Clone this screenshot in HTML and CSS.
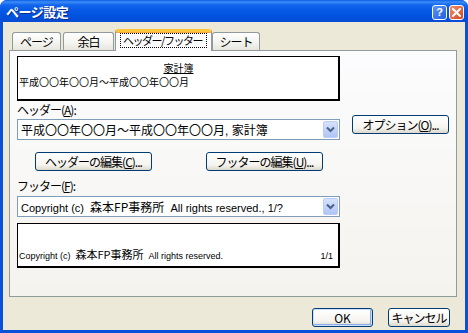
FILE: index.html
```html
<!DOCTYPE html>
<html>
<head>
	<title>ページ設定</title>
	<link rel="stylesheet" href="styles.css">
</head>
<body>
	<div class="window">
		<div class="titlebar">
			<span class="title">ページ設定</span>
			<span class="caption-btns">
				<span class="cap-btn help">?</span>
				<span class="cap-btn close">
					<svg width="9" height="9" viewBox="0 0 9 9"><path d="M1 1 L8 8 M8 1 L1 8" stroke="#fff" stroke-width="2" stroke-linecap="square"/></svg>
				</span>
			</span>
		</div>
		<div class="client">
			<div class="tabs">
				<div class="tab tab-page">ページ</div>
				<div class="tab tab-margin">余白</div>
				<div class="tab tab-active"><span class="focus">ヘッダー/フッター</span></div>
				<div class="tab tab-sheet">シート</div>
			</div>
			<div class="panel">
				<div class="left">
					<div class="preview preview-header">
						<div class="pv-center"><u>家計簿</u></div>
						<div class="pv-left">平成〇〇年〇〇月～平成〇〇年〇〇月</div>
					</div>
					<div class="label">ヘッダー(<u>A</u>):</div>
					<div class="combo">
						<span class="combo-text">平成〇〇年〇〇月～平成〇〇年〇〇月, 家計簿</span>
						<span class="drop"><svg width="9" height="7" viewBox="0 0 9 7"><path d="M1 1.5 L4.5 5 L8 1.5" fill="none" stroke="#4D6185" stroke-width="2"/></svg></span>
					</div>
					<div class="edit-row">
						<button class="btn btn-edit">ヘッダーの編集(<u>C</u>)...</button>
						<button class="btn btn-edit">フッターの編集(<u>U</u>)...</button>
					</div>
					<div class="label label-footer">フッター(<u>F</u>):</div>
					<div class="combo combo-footer">
						<span class="combo-text latin">Copyright (c)  <span class="cjk-12">森本FP事務所</span>  All rights reserved., 1/?</span>
						<span class="drop"><svg width="9" height="7" viewBox="0 0 9 7"><path d="M1 1.5 L4.5 5 L8 1.5" fill="none" stroke="#4D6185" stroke-width="2"/></svg></span>
					</div>
					<div class="preview preview-footer">
						<span class="pv-foot">Copyright (c)  <span class="cjk">森本FP事務所</span>  All rights reserved.</span>
						<span class="pv-page">1/1</span>
					</div>
				</div>
				<div class="right">
					<button class="btn btn-option">オプション(<u>O</u>)...</button>
				</div>
			</div>
			<div class="dialog-btns">
				<button class="btn btn-ok">OK</button>
				<button class="btn btn-cancel">キャンセル</button>
			</div>
		</div>
	</div>
</body>
</html>
```

FILE: styles.css
```css
body {
	margin: 0;
	font-family: "Liberation Sans", "Noto Sans CJK JP", sans-serif;
	font-size: 12px;
	color: #000;
}

.window {
	width: 468px;
	height: 333px;
	display: flex;
	flex-direction: column;
	background: #0A50D8;
	border-radius: 7px 7px 0 0;
	overflow: hidden;
}

.titlebar {
	height: 22px;
	display: flex;
	align-items: center;
	justify-content: space-between;
	padding: 0 4px 0 6px;
	background: linear-gradient(#0A5FE8 0, #3C8CF6 2px, #1265EC 5px, #0458E4 11px, #0052DE 17px, #0A4BD4 22px);
}

.title {
	color: #fff;
	font-family: "Noto Sans CJK JP", sans-serif;
	font-weight: bold;
	font-size: 13px;
	text-shadow: 1px 1px 0 #0A2A8C;
	letter-spacing: -0.5px;
}

.caption-btns {
	display: flex;
	gap: 2px;
	margin-top: 2px;
}

.cap-btn {
	width: 13px;
	height: 13px;
	border: 1px solid #fff;
	border-radius: 3px;
	display: flex;
	align-items: center;
	justify-content: center;
	color: #fff;
	font-weight: bold;
	font-size: 11px;
}

.help {
	background: linear-gradient(135deg, #5E93F6, #2060E0);
}

.close {
	background: linear-gradient(135deg, #F0906A, #D8431C);
}

.client {
	flex: 1;
	margin: 0 3px 3px;
	background: #ECE9D8;
	display: flex;
	flex-direction: column;
}

.tabs {
	display: flex;
	align-items: flex-start;
	height: 22px;
	margin: 7px 0 -1px 9px;
	font-family: "Noto Sans CJK JP", sans-serif;
	letter-spacing: -1px;
	white-space: nowrap;
}

.tab {
	height: 18px;
	margin-top: 3px;
	box-sizing: border-box;
	border: 1px solid #919B9C;
	border-bottom: none;
	border-radius: 3px 3px 0 0;
	background: linear-gradient(#FFFFFF, #F3F3EF 60%, #E6E5DE);
	display: flex;
	align-items: center;
	justify-content: center;
	line-height: 14px;
}

.tab-page {
	width: 49px;
}

.tab-margin {
	width: 51px;
	margin-left: 2px;
}

.tab-active {
	position: relative;
	z-index: 1;
	width: 97px;
	height: 22px;
	margin-top: 0;
	margin-left: 1px;
	border-top: 3px solid #FFC83C;
	box-shadow: inset 0 1px 0 #F5A83A;
	background: #FCFCFE;
	padding-bottom: 2px;
}

.focus {
	border: 1px dotted #000;
	padding: 0 4px 0 2px;
	font-size: 11px;
	letter-spacing: -1.5px;
	line-height: 13px;
}

.tab-sheet {
	width: 48px;
}

.panel {
	height: 247px;
	box-sizing: border-box;
	margin: 0 8px 0 6px;
	border: 1px solid #919B9C;
	background: linear-gradient(#FCFCFE, #F4F3EE);
	display: flex;
	padding: 5px 0 0 7px;
}

.left {
	width: 323px;
	display: flex;
	flex-direction: column;
}

.preview {
	height: 45px;
	box-sizing: border-box;
	background: #fff;
	border: 1px solid #000;
	border-right-width: 2px;
	border-bottom-width: 2px;
}

.preview-header {
	padding: 4px 0 0 1px;
	font-family: "Noto Sans CJK JP", sans-serif;
	font-size: 10px;
	line-height: 14px;
}

.pv-center {
	text-align: center;
}

.label {
	margin-top: 2px;
	line-height: 14px;
	font-family: "Noto Sans CJK JP", sans-serif;
	letter-spacing: -1px;
}

.label-footer {
	margin-top: 8px;
}

.combo {
	margin-top: 2px;
	height: 21px;
	box-sizing: border-box;
	border: 1px solid #7F9DB9;
	background: #fff;
	display: flex;
	align-items: center;
	justify-content: space-between;
	padding: 0 1px 0 3px;
}

.combo-footer {
	margin-top: 3px;
}

.combo-text {
	white-space: pre;
	font-size: 12px;
}

.latin {
	font-size: 11px;
}

.cjk-12 {
	font-family: "Noto Sans CJK JP", sans-serif;
	font-size: 12px;
}

.drop {
	width: 15px;
	height: 17px;
	box-sizing: border-box;
	border: 1px solid #BBCDF6;
	border-radius: 2px;
	background: linear-gradient(#D6E2FC, #BFD1FA 60%, #B0C5F6);
	display: flex;
	align-items: center;
	justify-content: center;
}

.edit-row {
	display: flex;
	margin-top: 12px;
	padding-left: 18px;
	gap: 54px;
}

.btn {
	height: 19px;
	box-sizing: border-box;
	border: 1px solid #003C74;
	border-radius: 3px;
	background: linear-gradient(#FFFFFF, #F5F4EF 70%, #DCD8CC);
	font-family: "Noto Sans CJK JP", sans-serif;
	font-size: 12px;
	line-height: 15px;
	letter-spacing: -1px;
	padding: 0;
	color: #000;
}

.btn-edit {
	width: 117px;
}

.preview-footer {
	margin-top: 6px;
	display: flex;
	align-items: flex-end;
	justify-content: space-between;
	padding: 0 5px 4px 1px;
	font-size: 9px;
	line-height: 12px;
}

.pv-foot {
	white-space: pre;
}

.cjk {
	font-family: "Noto Sans CJK JP", sans-serif;
	font-size: 11px;
}

.right {
	margin-left: 12px;
	padding-top: 59px;
}

.btn-option {
	width: 97px;
}

.dialog-btns {
	display: flex;
	justify-content: flex-end;
	gap: 15px;
	margin: 11px 15px 0 0;
}

.btn-ok {
	width: 61px;
	letter-spacing: 0;
	box-shadow: inset 0 0 0 1px #CCE0FB, inset -1px -1px 0 1px #88ABEA;
}

.btn-cancel {
	width: 62px;
}
```
